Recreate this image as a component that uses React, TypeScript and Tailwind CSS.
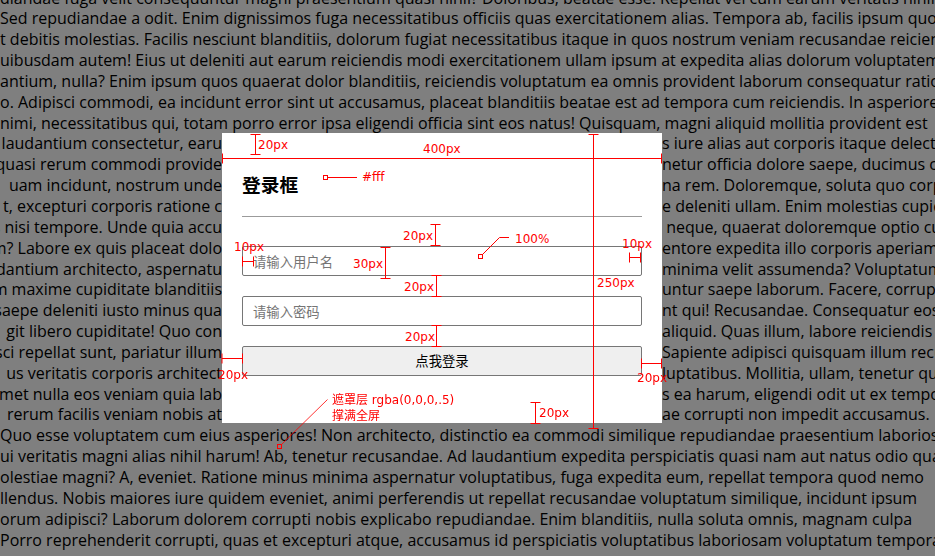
import React from 'react';

// background paragraph, as it shows through the mask
const topRows = [
    'diandae fuga velit consequuntur magni praesentium quasi nihil? Doloribus, beatae esse. Repellat vel cum earum veritatis nihil',
    'Sed repudiandae a odit. Enim dignissimos fuga necessitatibus officiis quas exercitationem alias. Tempora ab, facilis ipsum quo',
    't debitis molestias. Facilis nesciunt blanditiis, dolorum fugiat necessitatibus itaque in quos nostrum veniam recusandae reiciendis',
    'uibusdam autem! Eius ut deleniti aut earum reiciendis modi exercitationem ullam ipsum at expedita alias dolorum voluptatem',
    'antium, nulla? Enim ipsum quos quaerat dolor blanditiis, reiciendis voluptatum ea omnis provident laborum consequatur rationem',
    'o. Adipisci commodi, ea incidunt error sint ut accusamus, placeat blanditiis beatae est ad tempora cum reiciendis. In asperiores',
    'nimi, necessitatibus qui, totam porro error ipsa eligendi officia sint eos natus! Quisquam, magni aliquid mollitia provident est',
];

// rows cut in two by the login box
const splitRows: [string, string][] = [
    ['laudantium consectetur, earu', 's iure alias aut corporis itaque delectus'],
    ['quasi rerum commodi provide', 'netur officia dolore saepe, ducimus con'],
    ['uam incidunt, nostrum unde', 'na rem. Doloremque, soluta quo corporis'],
    ['t, excepturi corporis ratione c', 'e deleniti ullam. Enim molestias cupiditate'],
    ['s nisi tempore. Unde quia accu', '\u00a0neque, quaerat doloremque optio cum'],
    ['m? Labore ex quis placeat dolo', 'entore expedita illo corporis aperiam'],
    ['dantium architecto, aspernatu', 'minima velit assumenda? Voluptatum'],
    ['m maxime cupiditate blanditiis', 'untur saepe laborum. Facere, corrupti'],
    ['saepe deleniti iusto minus qua', 'nt qui! Recusandae. Consequatur eos'],
    ['git libero cupiditate! Quo con', 'aliquid. Quas illum, labore reiciendis'],
    ['sci repellat sunt, pariatur illum', 'Sapiente adipisci quisquam illum recusandae'],
    ['us veritatis corporis architect', 'luptatibus. Mollitia, ullam, tenetur quis'],
    ['met nulla eos veniam quia lab', 's ea harum, eligendi odit ut ex tempora'],
    ['\u00a0rerum facilis veniam nobis at', 'ae corrupti non impedit accusamus.'],
];

const bottomRows = [
    'Quo esse voluptatem cum eius asperiores! Non architecto, distinctio ea commodi similique repudiandae praesentium laboriosam',
    'ui veritatis magni alias nihil harum! Ab, tenetur recusandae. Ad laudantium expedita perspiciatis quasi nam aut natus odio quas',
    'olestiae magni? A, eveniet. Ratione minus minima aspernatur voluptatibus, fuga expedita eum, repellat tempora quod nemo',
    'llendus. Nobis maiores iure quidem eveniet, animi perferendis ut repellat recusandae voluptatum similique, incidunt ipsum',
    'orum adipisci? Laborum dolorem corrupti nobis explicabo repudiandae. Enim blanditiis, nulla soluta omnis, magnam culpa',
    'Porro reprehenderit corrupti, quas et excepturi atque, accusamus id perspiciatis voluptatibus laboriosam voluptatum tempora',
];

function Row({ text }: { text: string }) {
    return <div className="overflow-hidden whitespace-nowrap">{text}</div>;
}

// red dimension line with end caps
function VDim({ x, y1, y2 }: { x: number; y1: number; y2: number }) {
    return (
        <g>
            <line x1={x} y1={y1} x2={x} y2={y2} />
            <line x1={x - 5} y1={y1} x2={x + 5} y2={y1} />
            <line x1={x - 5} y1={y2} x2={x + 5} y2={y2} />
        </g>
    );
}

function HDim({ y, x1, x2 }: { y: number; x1: number; x2: number }) {
    return (
        <g>
            <line x1={x1} y1={y} x2={x2} y2={y} />
            <line x1={x1} y1={y - 5} x2={x1} y2={y + 5} />
            <line x1={x2} y1={y - 5} x2={x2} y2={y + 5} />
        </g>
    );
}

function Annotations() {
    const label = "absolute whitespace-nowrap font-['DejaVu_Sans','Noto_Sans_CJK_SC',sans-serif] text-[12px] leading-[14px] text-[#ff0000]";
    return (
        <div className="pointer-events-none fixed inset-0">
            <svg width="935" height="556" className="absolute inset-0" fill="none" stroke="#ff0000" strokeWidth="1">
                <VDim x={255.5} y1={134.5} y2={154.5} />
                <HDim y={158.5} x1={222.5} x2={661.5} />
                <rect x={323.5} y={175.5} width={4} height={4} />
                <line x1={327.5} y1={177.5} x2={357} y2={177.5} />
                <VDim x={435.5} y1={224.5} y2={245.5} />
                <rect x={478.5} y={254.5} width={4} height={4} />
                <polyline points="482.5,254.5 499.5,237.5 509,237.5" />
                <HDim y={257.5} x1={629.5} x2={640.5} />
                <HDim y={261.5} x1={242.5} x2={253.5} />
                <VDim x={385.5} y1={247.5} y2={278.5} />
                <VDim x={593.5} y1={134.5} y2={428.5} />
                <VDim x={436.5} y1={275.5} y2={296.5} />
                <VDim x={436.5} y1={325.5} y2={346.5} />
                <HDim y={358.5} x1={222} x2={242.5} />
                <HDim y={363.5} x1={641.5} x2={661.5} />
                <rect x={277.5} y={444.5} width={4} height={4} />
                <line x1={281.5} y1={444.5} x2={327.5} y2={399.5} strokeWidth="0.8" />
                <VDim x={535.5} y1={402.5} y2={423.5} />
            </svg>
            <span className={`${label} left-[258px] top-[138px]`}>20px</span>
            <span className={`${label} left-[423px] top-[142px]`}>400px</span>
            <span className={`${label} left-[362px] top-[170px]`}>#fff</span>
            <span className={`${label} left-[403px] top-[229px]`}>20px</span>
            <span className={`${label} left-[515px] top-[232px]`}>100%</span>
            <span className={`${label} left-[622px] top-[237px]`}>10px</span>
            <span className={`${label} left-[234px] top-[240px]`}>10px</span>
            <span className={`${label} left-[353px] top-[257px]`}>30px</span>
            <span className={`${label} left-[597px] top-[276px]`}>250px</span>
            <span className={`${label} left-[404px] top-[280px]`}>20px</span>
            <span className={`${label} left-[405px] top-[330px]`}>20px</span>
            <span className={`${label} left-[218px] top-[368px]`}>20px</span>
            <span className={`${label} left-[637px] top-[371px]`}>20px</span>
            <span className={`${label} left-[332px] top-[393px]`}>遮罩层 rgba(0,0,0,.5)</span>
            <span className={`${label} left-[332px] top-[409px]`}>撑满全屏</span>
            <span className={`${label} left-[539px] top-[406px]`}>20px</span>
        </div>
    );
}

export default function App() {
    return (
        <div className="relative h-[556px] w-full overflow-hidden bg-white font-['Open_Sans',sans-serif] text-[16px] leading-[20.85px] text-black">
            {/* page text */}
            <div className="-mt-[12.45px]">
                {topRows.map((t, i) => (
                    <Row key={`t${i}`} text={t} />
                ))}
                {splitRows.map(([l, r], i) => (
                    <div key={`s${i}`} className="grid grid-cols-[222px_440px_1fr] whitespace-nowrap">
                        <div className="flex justify-end overflow-hidden">{l}</div>
                        <div />
                        <div className="overflow-hidden">{r}</div>
                    </div>
                ))}
                {bottomRows.map((t, i) => (
                    <Row key={`b${i}`} text={t} />
                ))}
            </div>

            {/* mask + login box */}
            <div className="fixed inset-0 flex items-center bg-black/50">
                <div className="ml-[222px] flex h-[290px] w-[440px] flex-col bg-white px-[20px] pt-[20px] font-['Noto_Sans_CJK_SC',sans-serif]">
                    <div className="flex h-[63px] items-center">
                        <h3 className="text-[18.72px] font-bold leading-none text-black">登录框</h3>
                    </div>
                    <div className="h-px bg-[#9b9b9b]" />
                    <input
                        placeholder="请输入用户名"
                        className="mt-[29px] h-[30px] w-full rounded-[2px] border border-[#767676] px-[10px] text-[13.33px] outline-none placeholder:text-[#757575]"
                    />
                    <input
                        placeholder="请输入密码"
                        type="password"
                        className="mt-[20px] h-[30px] w-full rounded-[2px] border border-[#767676] px-[10px] text-[13.33px] outline-none placeholder:text-[#757575]"
                    />
                    <button className="mt-[20px] h-[30px] w-full rounded-[2px] border border-[#767676] bg-[#efefef] text-[13.33px] text-black">
                        点我登录
                    </button>
                </div>
            </div>

            <Annotations />
        </div>
    );
}
